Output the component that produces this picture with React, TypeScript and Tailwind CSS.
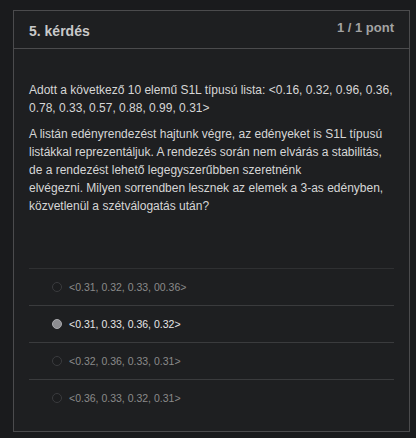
const options = [
  { label: '<0.31, 0.32, 0.33, 00.36>', checked: false },
  { label: '<0.31, 0.33, 0.36, 0.32>', checked: true },
  { label: '<0.32, 0.36, 0.33, 0.31>', checked: false },
  { label: '<0.36, 0.33, 0.32, 0.31>', checked: false },
];

export default function App() {
  return (
    <div className="min-h-[438px] w-[416px] bg-[#1a1b1d] pt-[10px] pl-[13px] font-['Liberation_Sans',Arial,sans-serif]">
      <div className="w-[397px] border border-[#4b4b4d] bg-[#1e1f21]">
        {/* Header */}
        <div className="flex h-[38px] justify-between border-b border-[#4b4b4d] px-[15px]">
          <h2 className="pt-[12px] text-[14px] leading-[16px] font-bold text-[#c9c9c9]">5. kérdés</h2>
          <span className="pt-[9px] text-[13px] leading-[15px] font-bold text-[#a3a3a3]">1 / 1 pont</span>
        </div>

        {/* Body */}
        <div className="px-[15px] pt-[32px] pb-[15px] text-[12px] leading-[18px] text-[#d6d6d6]">
          <p>Adott a következő 10 elemű S1L típusú lista: &lt;0.16, 0.32, 0.96, 0.36, 0.78, 0.33, 0.57, 0.88, 0.99, 0.31&gt;</p>
          <p className="mt-[8px]">
            A listán edényrendezést hajtunk végre, az edényeket is S1L típusú listákkal reprezentáljuk. A rendezés során nem elvárás a stabilitás, de a rendezést lehető legegyszerűbben szeretnénk
            <br />
            elvégezni. Milyen sorrendben lesznek az elemek a 3-as edényben, közvetlenül a szétválogatás után?
          </p>

          <div className="mt-[53px]">
            {options.map((o) => (
              <div key={o.label} className="flex h-[37px] items-center border-t border-[#3a3b3d] pl-[23px] first:border-[#2f3032]">
                <span
                  className={`h-[10px] w-[10px] rounded-full border ${
                    o.checked ? 'border-[#a9a9ad] bg-[#8c8c90]' : 'border-[#3a3b3e] bg-[#1c1d1f]'
                  }`}
                />
                <span className={`ml-[7px] text-[10.5px] ${o.checked ? 'text-[#e6e6e6]' : 'text-[#8a8a8a]'}`}>{o.label}</span>
              </div>
            ))}
          </div>
        </div>
      </div>
    </div>
  );
}
